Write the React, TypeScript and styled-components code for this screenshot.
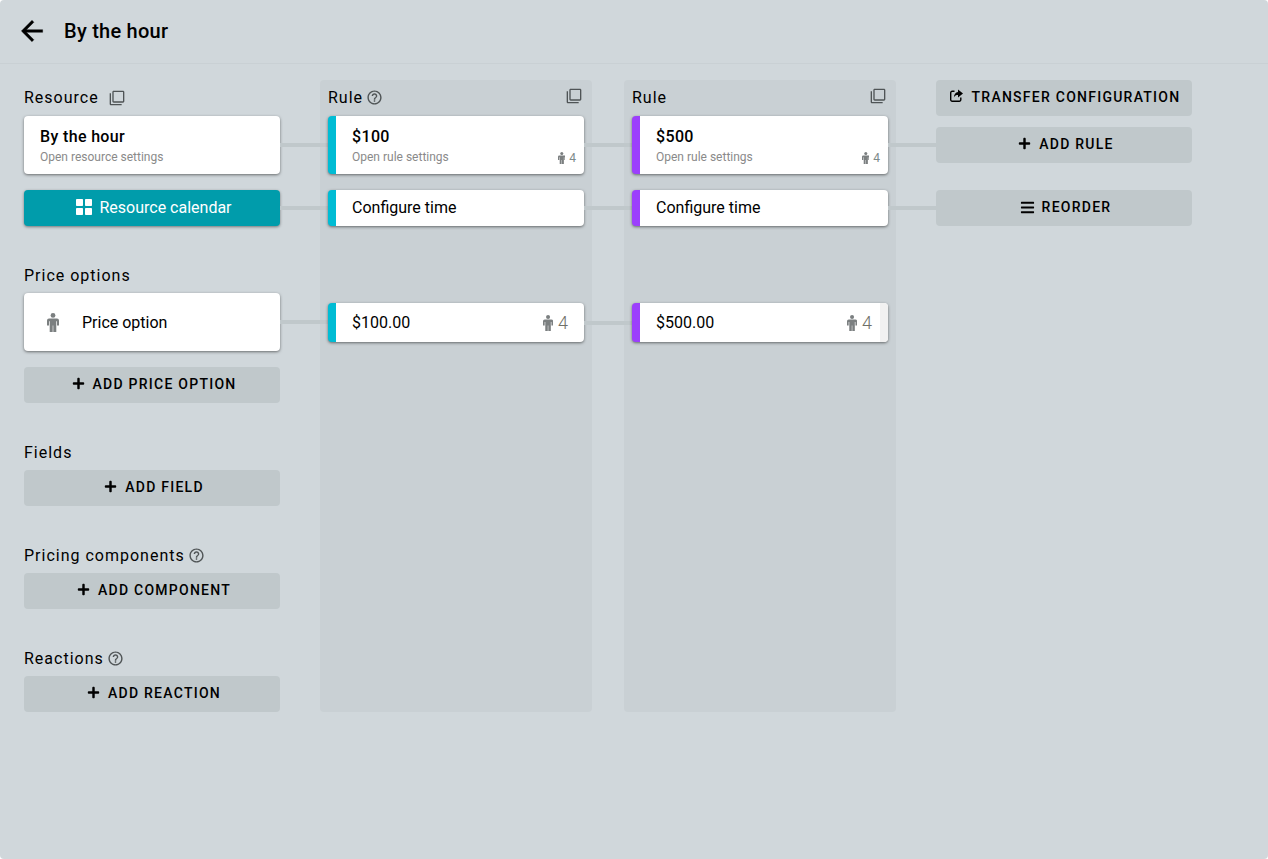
import React from "react";
import styled, { createGlobalStyle } from "styled-components";
import { FaPlus, FaBars } from "react-icons/fa";

const GlobalStyle = createGlobalStyle`
  html, body {
    margin: 0;
    padding: 0;
    background: #ffffff;
  }
  body {
    font-family: Roboto, "Liberation Sans", Arial, sans-serif;
    color: #000000;
  }
  * {
    box-sizing: border-box;
  }
`;

const Page = styled.div`
  width: 1268px;
  height: 859px;
  background: #d0d7db;
  border-radius: 4px;
  overflow: hidden;
`;

const Header = styled.header`
  height: 64px;
  display: flex;
  align-items: center;
  padding: 0 0 2px 20px;
  gap: 20px;
  border-bottom: 1px solid #c9d0d4;
`;

const BackIcon = styled.svg`
  width: 24px;
  height: 24px;
  fill: #000000;
  stroke: #000000;
  stroke-width: 0.3;
  transform: scale(1.33);
`;

const Title = styled.h1`
  margin: 0;
  font-size: 20px;
  line-height: 24px;
  font-weight: 500;
  letter-spacing: 0.25px;
`;

const Board = styled.main`
  display: flex;
  align-items: flex-start;
  padding: 16px 0 0 24px;
`;

const Column = styled.section`
  width: 256px;
  display: flex;
  flex-direction: column;
  margin-right: 40px;
`;

const RulePanel = styled.section`
  width: 272px;
  height: 632px;
  padding: 0 8px;
  margin-right: 32px;
  background: #c9d0d4;
  border-radius: 4px;
  display: flex;
  flex-direction: column;
`;

const ActionColumn = styled.section`
  width: 256px;
  margin-left: 8px;
  display: flex;
  flex-direction: column;
`;

const Label = styled.div<{ $top?: number }>`
  height: 36px;
  display: flex;
  align-items: center;
  gap: 3px;
  font-size: 16px;
  letter-spacing: 1px;
  margin-top: ${(p) => p.$top ?? 0}px;
`;

const TopLabel = styled(Label)`
  padding-bottom: 2px;
`;

const PanelLabel = styled(TopLabel)`
  justify-content: space-between;
`;

const LabelGroup = styled.span`
  display: flex;
  align-items: center;
  gap: 3px;
`;

const GrayIcon = styled.svg<{ $size: number }>`
  width: ${(p) => p.$size}px;
  height: ${(p) => p.$size}px;
  fill: #4f5456;
  flex: none;
`;

// grey bar that links a card with whatever sits to the right of it
const Linked = styled.div<{ $link?: number }>`
  position: relative;
  ${(p) =>
    p.$link
      ? `&::after {
    content: "";
    position: absolute;
    left: 100%;
    top: 50%;
    width: ${p.$link}px;
    height: 4px;
    margin-top: -2px;
    background: #c0c8cb;
  }`
      : ""}
`;

const Card = styled(Linked)<{ $accent?: string; $height: number }>`
  height: ${(p) => p.$height}px;
  background: #ffffff;
  border-radius: 4px;
  border-left: ${(p) => (p.$accent ? `8px solid ${p.$accent}` : "0")};
  box-shadow: 0 1px 3px rgba(0, 0, 0, 0.5);
  display: flex;
  align-items: center;
  padding-left: 16px;
  font-size: 16px;
  line-height: 20px;
`;

const SettingsCard = styled(Card)`
  flex-direction: column;
  align-items: flex-start;
  justify-content: flex-start;
  padding-top: 11px;
`;

const CardTitle = styled.div`
  font-size: 16px;
  font-weight: 500;
  line-height: 20px;
  letter-spacing: 0.35px;
`;

const CardHint = styled.div`
  font-size: 12px;
  line-height: 16px;
  margin-top: 2px;
  color: #8a8a8a;
`;

const SmallCount = styled.div`
  position: absolute;
  right: 8px;
  bottom: 9px;
  display: flex;
  align-items: center;
  gap: 4px;
  font-size: 12px;
  line-height: 14px;
  color: #7e8a8a;
`;

const LargeCount = styled.div`
  margin-left: auto;
  margin-right: 16px;
  display: flex;
  align-items: center;
  gap: 5px;
  font-size: 18px;
  font-weight: 300;
  color: #6f6f68;
`;

const Person = styled.svg<{ $height: number }>`
  height: ${(p) => p.$height}px;
  width: ${(p) => (p.$height * 12) / 19}px;
  fill: #7b7f80;
  flex: none;
`;

const OptionCard = styled(Card)`
  padding-top: 1px;
`;

const OptionPerson = styled.span`
  display: flex;
  margin: 0 23px 0 7px;
`;

const Scrollbar = styled.div`
  position: absolute;
  top: 0;
  right: 0;
  bottom: 0;
  width: 8px;
  background: #f1f1f1;
  border-radius: 0 4px 4px 0;
`;

const CalendarButton = styled(Linked)`
  height: 36px;
  margin-top: 16px;
  padding: 0 0 2px 4px;
  background: #009cab;
  color: #ffffff;
  border-radius: 4px;
  box-shadow: 0 1px 3px rgba(0, 0, 0, 0.45);
  display: flex;
  align-items: center;
  justify-content: center;
  gap: 7px;
  font-size: 16px;
`;

const CalendarIcon = styled.svg`
  width: 16px;
  height: 16px;
  fill: #ffffff;
  flex: none;
`;

const ActionButton = styled.div<{ $top?: number }>`
  height: 36px;
  flex: none;
  margin-top: ${(p) => p.$top ?? 0}px;
  padding: 0 0 2px 4px;
  background: #c0c8cb;
  border-radius: 4px;
  display: flex;
  align-items: center;
  justify-content: center;
  gap: 8px;
  font-size: 14px;
  line-height: 16px;
  font-weight: 500;
  letter-spacing: 1.25px;
  color: #000000;
  svg {
    width: 13px;
    height: 13px;
    flex: none;
    margin-bottom: 1px;
  }
`;

const TransferButton = styled(ActionButton)`
  gap: 9px;
  padding-left: 2px;
  svg {
    margin-bottom: 3px;
  }
`;

const ReorderButton = styled(ActionButton)`
  gap: 7px;
  padding-left: 3px;
  svg {
    width: 15px;
    height: 15px;
    margin-bottom: 0;
  }
`;

const TimeCard = styled(Card)`
  margin-top: 16px;
`;

const PriceCard = styled(Card)`
  margin-top: 77px;
`;

const Arrow = () => (
  <BackIcon viewBox="0 0 24 24">
    <path d="M20 11H7.83l5.59-5.59L12 4l-8 8 8 8 1.41-1.41L7.83 13H20v-2z" />
  </BackIcon>
);

const CopyIcon = ({ className }: { className?: string }) => (
  <GrayIcon className={className} $size={16} viewBox="0 0 24 24">
    <path d="M3 5H1v16c0 1.1.9 2 2 2h16v-2H3V5zm18-4H7c-1.1 0-2 .9-2 2v14c0 1.1.9 2 2 2h14c1.1 0 2-.9 2-2V3c0-1.1-.9-2-2-2zm0 16H7V3h14v14z" />
  </GrayIcon>
);

const ResourceCopy = styled(CopyIcon)`
  margin: 2px 0 0 7px;
`;

const PanelCopy = styled(CopyIcon)`
  margin: 0 2px 2px 0;
`;

const HelpIcon = () => (
  <GrayIcon $size={17} viewBox="0 0 24 24">
    <path d="M11 18h2v-2h-2v2zm1-16C6.48 2 2 6.48 2 12s4.48 10 10 10 10-4.48 10-10S17.52 2 12 2zm0 18c-4.41 0-8-3.59-8-8s3.59-8 8-8 8 3.59 8 8-3.59 8-8 8zm0-14c-2.21 0-4 1.79-4 4h2c0-1.1.9-2 2-2s2 .9 2 2c0 2-3 1.75-3 5h2c0-2.25 3-2.5 3-5 0-2.21-1.79-4-4-4z" />
  </GrayIcon>
);

const PersonIcon = ({ height }: { height: number }) => (
  <Person $height={height} viewBox="0 0 12 19">
    <circle cx="6" cy="2.4" r="2.4" />
    <path d="M2 5.4h8a2 2 0 0 1 2 2v5.2h-2V8.2h-.7V19H6.3v-6.4h-.6V19H2.7V8.2H2v4.4H0V7.4a2 2 0 0 1 2-2z" />
  </Person>
);

const GridIcon = () => (
  <CalendarIcon viewBox="0 0 16 16">
    <rect x="0" y="0" width="7" height="7" rx="0.8" />
    <rect x="9" y="0" width="7" height="7" rx="0.8" />
    <rect x="0" y="9" width="7" height="7" rx="0.8" />
    <rect x="9" y="9" width="7" height="7" rx="0.8" />
  </CalendarIcon>
);

const TransferIcon = () => (
  <svg viewBox="0 0 13 13" fill="none">
    <path
      d="M4.5 2.2H2.2A1.5 1.5 0 0 0 .7 3.7v7.1a1.5 1.5 0 0 0 1.5 1.5h7.1a1.5 1.5 0 0 0 1.5-1.5V8.6"
      stroke="#000000"
      strokeWidth="1.4"
    />
    <path
      d="M8 .4l5 4-5 4V6C6.2 6 4.8 6.6 3.9 8.6 3.9 5.4 5.6 3.2 8 2.9V.4z"
      fill="#000000"
    />
  </svg>
);

const rules = [
  { id: 1, accent: "#00bcd4", amount: "$100", price: "$100.00", help: true, bar: false },
  { id: 2, accent: "#9c3ffc", amount: "$500", price: "$500.00", help: false, bar: true },
];

const App: React.FC = () => {
  return (
    <Page>
      <GlobalStyle />
      <Header>
        <Arrow />
        <Title>By the hour</Title>
      </Header>
      <Board>
        <Column>
          <TopLabel>
            Resource
            <ResourceCopy />
          </TopLabel>
          <SettingsCard $height={58} $link={48}>
            <CardTitle>By the hour</CardTitle>
            <CardHint>Open resource settings</CardHint>
          </SettingsCard>
          <CalendarButton $link={48}>
            <GridIcon />
            Resource calendar
          </CalendarButton>

          <Label $top={31}>Price options</Label>
          <OptionCard $height={58} $link={48}>
            <OptionPerson>
              <PersonIcon height={19} />
            </OptionPerson>
            Price option
          </OptionCard>
          <ActionButton $top={16}>
            <FaPlus />
            ADD PRICE OPTION
          </ActionButton>

          <Label $top={31}>Fields</Label>
          <ActionButton>
            <FaPlus />
            ADD FIELD
          </ActionButton>

          <Label $top={31}>
            Pricing components
            <HelpIcon />
          </Label>
          <ActionButton>
            <FaPlus />
            ADD COMPONENT
          </ActionButton>

          <Label $top={31}>
            Reactions
            <HelpIcon />
          </Label>
          <ActionButton>
            <FaPlus />
            ADD REACTION
          </ActionButton>
        </Column>

        {rules.map((rule) => (
          <RulePanel key={rule.id}>
            <PanelLabel>
              <LabelGroup>
                Rule
                {rule.help && <HelpIcon />}
              </LabelGroup>
              <PanelCopy />
            </PanelLabel>
            <SettingsCard $height={58} $accent={rule.accent} $link={48}>
              <CardTitle>{rule.amount}</CardTitle>
              <CardHint>Open rule settings</CardHint>
              <SmallCount>
                <PersonIcon height={12} />4
              </SmallCount>
            </SettingsCard>
            <TimeCard $height={36} $accent={rule.accent} $link={48}>
              Configure time
            </TimeCard>
            <PriceCard $height={39} $accent={rule.accent} $link={rule.bar ? 0 : 48}>
              {rule.price}
              <LargeCount>
                <PersonIcon height={16} />4
              </LargeCount>
              {rule.bar && <Scrollbar />}
            </PriceCard>
          </RulePanel>
        ))}

        <ActionColumn>
          <TransferButton>
            <TransferIcon />
            TRANSFER CONFIGURATION
          </TransferButton>
          <ActionButton $top={11}>
            <FaPlus />
            ADD RULE
          </ActionButton>
          <ReorderButton $top={27}>
            <FaBars />
            REORDER
          </ReorderButton>
        </ActionColumn>
      </Board>
    </Page>
  );
};

export default App;
